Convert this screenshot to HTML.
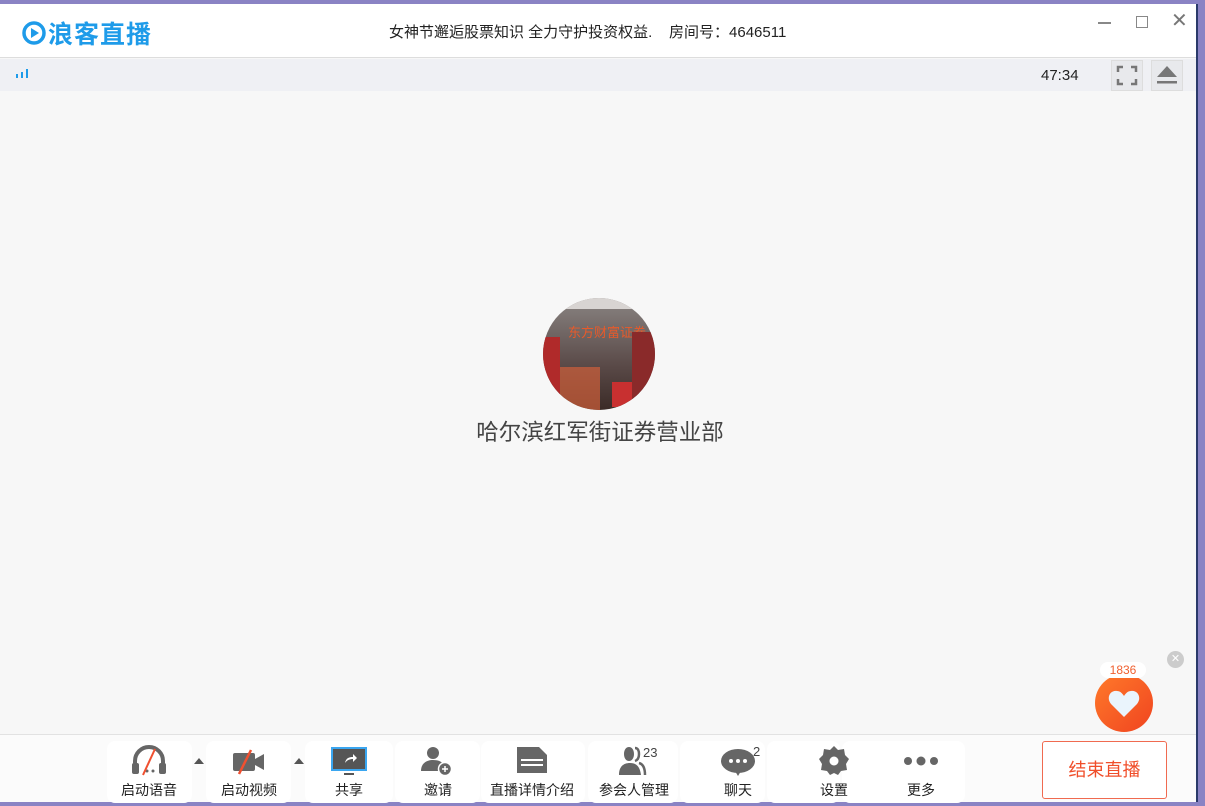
<!DOCTYPE html>
<html><head><meta charset="utf-8"><style>
*{margin:0;padding:0;box-sizing:border-box}
body{width:1205px;height:806px;background:#8a83c4;position:relative;overflow:hidden;font-family:"Liberation Sans","Noto Sans CJK SC",sans-serif}
.win{position:absolute;left:0;top:4px;width:1198px;height:798px;background:#f7f7f7;border-right:2px solid #2a3a6a}
.title{position:absolute;left:0;top:0;width:1196px;height:54px;background:#fff;border-bottom:1px solid #ddd}
.logo{position:absolute;left:22px;top:11px;display:flex;align-items:center;color:#1e9be9;font-weight:bold;font-size:25px}
.ttl{position:absolute;left:389px;top:17px;font-size:15px;color:#222}
.bar{position:absolute;left:0;top:55px;width:1196px;height:32px;background:#eff0f4}
.time{position:absolute;left:1041px;top:8px;font-size:15px;color:#222}
.btnsq{position:absolute;top:1px;width:32px;height:31px;background:#e8e9ec;border:1px solid #ddd}
.toolbar{position:absolute;left:0;top:730px;width:1196px;height:68px;background:#fbfbfb;border-top:1px solid #e2e2e2}
.bg{position:absolute;top:6px;height:62px;background:#fff;border-radius:8px}
.it{position:absolute;top:0;width:0;height:68px}
.it svg{position:absolute;top:10px;transform:translateX(-50%);left:0}
.it .lbl{position:absolute;top:45px;left:-60px;width:120px;text-align:center;font-size:14px;color:#222;white-space:nowrap}
.end{position:absolute;left:1042px;top:6px;width:125px;height:58px;border:1px solid #f06a50;border-radius:3px;color:#f04e2a;font-size:18px;text-align:center;line-height:56px;background:#fff}
.tri{position:absolute;top:23px;width:0;height:0;border-left:5px solid transparent;border-right:5px solid transparent;border-bottom:6px solid #555}
</style></head><body>
<div class="win">
 <div class="title">
  <div class="logo"><svg width="24" height="24" viewBox="0 0 24 24"><circle cx="12" cy="12" r="10" fill="none" stroke="#1e9be9" stroke-width="3.5"/><path d="M9 7l8 5-8 5z" fill="#1e9be9"/></svg><span style="margin-left:2px;letter-spacing:1px">浪客直播</span></div>
  <div class="ttl">女神节邂逅股票知识 全力守护投资权益.&nbsp;&nbsp;&nbsp;&nbsp;房间号：4646511</div>
  <div style="position:absolute;left:1098px;top:18px;width:13px;height:1.5px;background:#888"></div>
  <div style="position:absolute;left:1136px;top:12px;width:12px;height:12px;border:1.5px solid #888"></div>
  <div style="position:absolute;left:1171px;top:4px;font-size:20px;color:#777">✕</div>
 </div>
 <div class="bar">
  <svg style="position:absolute;left:16px;top:10px" width="14" height="10"><rect x="0" y="5" width="2" height="4" fill="#1e9be9"/><rect x="5" y="3" width="2" height="6" fill="#1e9be9"/><rect x="10" y="0" width="2" height="9" fill="#1e9be9"/></svg>
  <div class="time">47:34</div>
  <div class="btnsq" style="left:1111px"><svg width="30" height="29" viewBox="0 0 30 29"><path d="M6 11V6h5M19 6h5v5M24 18v5h-5M11 23H6v-5" fill="none" stroke="#777" stroke-width="2.5"/></svg></div>
  <div class="btnsq" style="left:1151px"><svg width="30" height="29" viewBox="0 0 30 29"><path d="M15 5l10 11H5z" fill="#777"/><rect x="5" y="20" width="20" height="2.5" fill="#777"/></svg></div>
 </div>
 <svg style="position:absolute;left:542px;top:293px" width="114" height="114" viewBox="0 0 114 114"><defs><clipPath id="c"><circle cx="57" cy="57" r="56"/></clipPath><linearGradient id="g" x1="0" y1="0" x2="0" y2="1"><stop offset="0" stop-color="#8a8583"/><stop offset=".6" stop-color="#5a4a48"/><stop offset="1" stop-color="#3a2a26"/></linearGradient></defs><g clip-path="url(#c)"><rect width="114" height="114" fill="url(#g)"/><rect x="0" y="0" width="114" height="12" fill="#d8d4d2"/><text x="26" y="40" font-size="13" fill="#e85a2a" font-family="Noto Sans CJK SC">东方财富证券</text><rect x="0" y="40" width="18" height="70" fill="#b02a2a"/><rect x="90" y="35" width="24" height="79" fill="#8a2a2a"/><rect x="18" y="70" width="40" height="44" fill="#d0603a" opacity=".7"/><rect x="70" y="85" width="20" height="25" fill="#c83030"/></g></svg>
 <div style="position:absolute;left:0;width:1200px;top:411px;text-align:center;font-size:22.5px;color:#444">哈尔滨红军街证券营业部</div>
 <div style="position:absolute;left:1167px;top:647px;width:17px;height:17px;border-radius:50%;background:#ccc;color:#fff;font-size:11px;text-align:center;line-height:17px">✕</div>
 <div style="position:absolute;left:1095px;top:670px;width:58px;height:58px;border-radius:50%;background:linear-gradient(135deg,#ff7a2a,#f04420)"></div>
 <svg style="position:absolute;left:1107px;top:685px" width="34" height="30" viewBox="0 0 34 30"><path d="M17 28L4 15C-1 9 3 1 10 2c3 0 5 2 7 5 2-3 4-5 7-5 7-1 11 7 6 13z" fill="#eaf4fc"/></svg>
 <div style="position:absolute;left:1100px;top:658px;width:46px;height:16px;background:#fff;border-radius:8px;color:#f06030;font-size:12px;text-align:center;line-height:16px">1836</div>
 <div class="toolbar">
  <div class="bg" style="left:107px;width:85px"></div>
  <div class="bg" style="left:206px;width:85px"></div>
  <div class="bg" style="left:305px;width:88px"></div>
  <div class="bg" style="left:395px;width:85px"></div>
  <div class="bg" style="left:481px;width:104px"></div>
  <div class="bg" style="left:588px;width:90px"></div>
  <div class="bg" style="left:680px;width:85px"></div>
  <div class="bg" style="left:767px;width:73px"></div>
  <div class="bg" style="left:842px;width:123px"></div>
  <div class="it" style="left:149px"><svg width="40" height="32" viewBox="0 0 40 32"><path d="M6 22v-6a14 14 0 0 1 28 0v6" fill="none" stroke="#666" stroke-width="4"/><rect x="3" y="18" width="7" height="11" rx="2" fill="#666"/><rect x="30" y="18" width="7" height="11" rx="2" fill="#666"/><circle cx="18" cy="26" r="1.5" fill="#666"/><circle cx="24" cy="26" r="1.5" fill="#666"/><line x1="26" y1="4" x2="14" y2="30" stroke="#f05030" stroke-width="2"/></svg><div class="lbl">启动语音</div></div>
  <div class="tri" style="left:194px"></div>
  <div class="it" style="left:249px"><svg width="36" height="28" viewBox="0 0 36 28" style="top:12px"><rect x="2" y="6" width="22" height="18" rx="2" fill="#666"/><path d="M24 12l9-5v16l-9-5z" fill="#666"/><line x1="20" y1="3" x2="8" y2="27" stroke="#f05030" stroke-width="2.5"/></svg><div class="lbl">启动视频</div></div>
  <div class="tri" style="left:294px"></div>
  <div class="it" style="left:349px"><svg width="38" height="32" viewBox="0 0 38 32"><rect x="1" y="2" width="36" height="24" fill="#3aa6f0"/><rect x="3" y="4" width="32" height="20" fill="#555"/><path d="M15 18c1-5 4-6 8-6v-3l4 4-4 4v-3c-3 0-6 1-8 4z" fill="#fff"/><rect x="14" y="28" width="10" height="2" fill="#555"/></svg><div class="lbl">共享</div></div>
  <div class="it" style="left:438px"><svg width="34" height="32" viewBox="0 0 34 32"><circle cx="12" cy="8" r="6" fill="#666"/><path d="M0 26c0-8 6-11 12-11s9 2 10 4v7z" fill="#666"/><circle cx="24" cy="24" r="6.5" fill="#666" stroke="#fff" stroke-width="1.5"/><path d="M21 24h6M24 21v6" stroke="#fff" stroke-width="1.5"/></svg><div class="lbl">邀请</div></div>
  <div class="it" style="left:532px"><svg width="34" height="30" viewBox="0 0 34 30"><path d="M2 2h22l8 8v18H2z" fill="#666"/><rect x="6" y="14" width="22" height="2" fill="#fff"/><rect x="6" y="19" width="22" height="2" fill="#fff"/></svg><div class="lbl">直播详情介绍</div></div>
  <div class="it" style="left:642px"><svg width="46" height="32" viewBox="0 0 46 32"><path d="M10 2c-3 0-5 3-5 7s2 7 5 7 5-3 5-7-2-7-5-7zM0 30c0-8 4-12 11-12s10 4 11 12z" fill="#666"/><path d="M16 3c3 0 4 3 4 6s-1 6-4 7M20 18c4 1 6 5 6 12" fill="none" stroke="#666" stroke-width="2.5"/><text x="24" y="12" font-size="13" fill="#444" font-family="Liberation Sans">23</text></svg><div class="lbl" style="left:-68px">参会人管理</div></div>
  <div class="it" style="left:742px"><svg width="44" height="32" viewBox="0 0 44 32"><ellipse cx="18" cy="16" rx="17" ry="12" fill="#666"/><path d="M15 26l3 5 3-5z" fill="#666"/><circle cx="11" cy="16" r="2" fill="#fff"/><circle cx="18" cy="16" r="2" fill="#fff"/><circle cx="25" cy="16" r="2" fill="#fff"/><text x="33" y="11" font-size="13" fill="#444" font-family="Liberation Sans">2</text></svg><div class="lbl" style="left:-64px">聊天</div></div>
  <div class="it" style="left:834px"><svg width="32" height="32" viewBox="0 0 32 32"><path d="M16 1l4 4 6-1 1 6 4 4-3 5 1 6-6 1-3 4-4-2-4 2-3-4-6-1 1-6-3-5 4-4 1-6 6 1z" fill="#666"/><circle cx="16" cy="16" r="4.5" fill="#fff"/></svg><div class="lbl">设置</div></div>
  <div class="it" style="left:921px"><svg width="38" height="14" viewBox="0 0 38 14" style="top:19px"><circle cx="6" cy="7" r="4" fill="#666"/><circle cx="19" cy="7" r="4.5" fill="#666"/><circle cx="32" cy="7" r="4" fill="#666"/></svg><div class="lbl">更多</div></div>
  <div class="end">结束直播</div>
 </div>
</div>
</body></html>
